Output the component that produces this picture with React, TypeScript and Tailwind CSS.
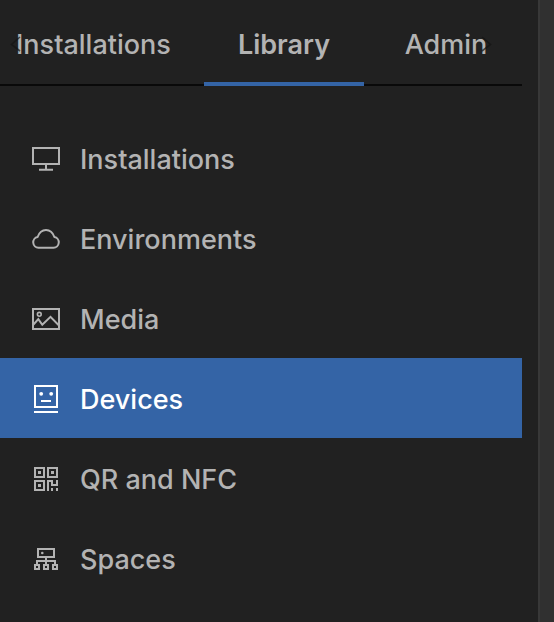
import type { ReactNode } from "react";
import { clsx } from "clsx";

function Icon({ children }: { children: ReactNode }) {
  return (
    <svg
      viewBox="0 0 28 28"
      className="size-7 shrink-0 overflow-visible"
      fill="none"
      stroke="currentColor"
      strokeWidth="2"
      aria-hidden="true"
    >
      {children}
    </svg>
  );
}

const items: { label: string; icon: ReactNode }[] = [
  {
    label: "Installations",
    icon: (
      <Icon>
        <rect x="1" y="4" width="26" height="16" />
        <path d="M14 20v5M7 25.7h14" />
      </Icon>
    ),
  },
  {
    label: "Environments",
    icon: (
      <Icon>
        <path d="M6.5 23.7A5.4 5.4 0 0 1 5.6 13C7.2 8.6 10 6 14 6S20.8 8.6 22.4 13A5.4 5.4 0 0 1 21.5 23.7Z" />
      </Icon>
    ),
  },
  {
    label: "Media",
    icon: (
      <Icon>
        <rect x="1" y="5" width="26" height="20" />
        <circle cx="7.3" cy="10.3" r="1.9" strokeWidth="1.6" />
        <path d="M1.5 20.5L6.3 15.2L10.3 20.8L18.5 12.8L26.5 21" />
      </Icon>
    ),
  },
  {
    label: "Devices",
    icon: (
      <Icon>
        <rect x="3" y="2" width="22" height="21" />
        <path d="M2 28h24M9 17h10" />
        <circle cx="9.2" cy="9.8" r="1.9" fill="currentColor" stroke="none" />
        <circle cx="19.2" cy="9.8" r="1.9" fill="currentColor" stroke="none" />
      </Icon>
    ),
  },
  {
    label: "QR and NFC",
    icon: (
      <Icon>
        <path d="M3 4h9v9H3zM16 4h9v9h-9zM3 17h9v9H3z" />
        <path
          d="M6 7h3v3H6zM19 7h3v3h-3zM6 20h3v3H6zM15 16h6v4h3v-4h2v6h-7v-4h-2v9h-2zM19 24h2v3h-2zM24 24h2v3h-2z"
          fill="currentColor"
          stroke="none"
        />
      </Icon>
    ),
  },
  {
    label: "Spaces",
    icon: (
      <Icon>
        <path d="M6 5h16v8H6zM14 13v8M5 21v-4h18v4M3 21h4v4H3zM12 21h4v4h-4zM21 21h4v4h-4z" />
        <circle cx="10.3" cy="9" r="1.3" fill="currentColor" stroke="none" />
      </Icon>
    ),
  },
];

const tabs = [
  { label: "Installations", size: "w-[204px] pl-4 text-left" },
  { label: "Library", size: "w-40 text-center" },
  { label: "Admin", size: "w-[164px] text-center" },
];

export default function App() {
  return (
    <div className="flex min-h-screen bg-[#212121] font-[Inter,'Liberation_Sans',sans-serif] text-[27px] leading-8 font-medium text-[#b3b3b3]">
      <div className="min-w-0 flex-1 pr-4">
        <div className="relative border-b-2 border-[#090909]">
          <div role="tablist" className="-mb-0.5 flex overflow-hidden">
            {tabs.map((tab) => (
              <button
                key={tab.label}
                type="button"
                role="tab"
                aria-selected={tab.label === "Library"}
                className={clsx(
                  "shrink-0 border-b-4 pt-[29px] pb-[21px]",
                  tab.size,
                  tab.label === "Library" ? "border-[#3464a6] font-semibold" : "border-transparent",
                )}
              >
                {tab.label}
              </button>
            ))}
          </div>
          <button type="button" aria-label="Previous tabs" className="absolute top-9 left-2.5 text-[#141414]/70">
            <svg viewBox="0 0 12 16" className="h-4 w-3" fill="none" stroke="currentColor" strokeWidth="1.6">
              <path d="M10 1L1.5 8.5L10 15" />
            </svg>
          </button>
          <button type="button" aria-label="Next tabs" className="absolute top-9 right-[30px] text-[#141414]/70">
            <svg viewBox="0 0 12 16" className="h-4 w-3" fill="none" stroke="currentColor" strokeWidth="1.6">
              <path d="M2 1L10.5 8.5L2 15" />
            </svg>
          </button>
        </div>
        <nav aria-label="Library" className="pt-8">
          {items.map((item) => (
            <a
              key={item.label}
              href={"#" + item.label}
              aria-current={item.label === "Devices" ? "page" : undefined}
              className={clsx(
                "flex h-20 items-center gap-5 px-8",
                item.label === "Devices" && "bg-[#3464a6] text-white",
              )}
            >
              {item.icon}
              <span className="pt-1">{item.label}</span>
            </a>
          ))}
        </nav>
      </div>
      <div className="w-4 shrink-0 border-l-2 border-[#383838] bg-[#303030]" />
    </div>
  );
}
